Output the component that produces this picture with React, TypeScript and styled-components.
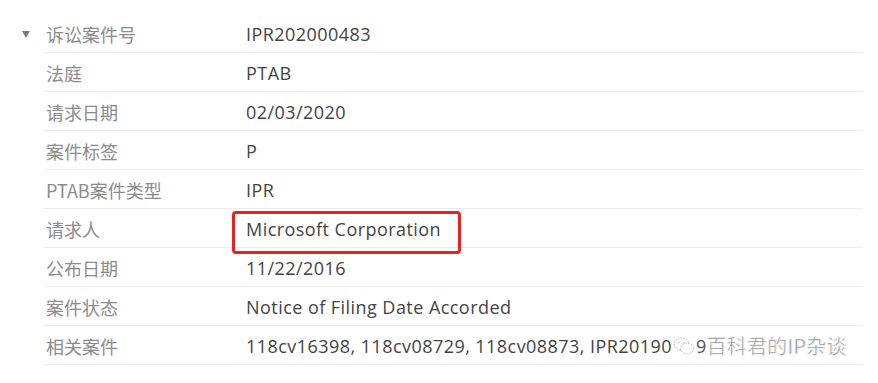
import React from "react";
import styled, { createGlobalStyle } from "styled-components";

const Global = createGlobalStyle`
  html, body { margin: 0; padding: 0; background: #fff; }
  body { font-family: "Open Sans", "Noto Sans CJK SC", sans-serif; }
`;

const Page = styled.div`
  width: 878px;
  height: 383px;
  padding: 14px 16px 0 16px;
  box-sizing: border-box;
  background: #fff;
  overflow: hidden;
`;

const Table = styled.div`
  display: flex;
  flex-direction: column;
`;

const Row = styled.div`
  display: flex;
  align-items: center;
  height: 39px;
`;

const Toggle = styled.div`
  width: 28px;
  flex: none;
  display: flex;
  justify-content: flex-start;
  padding-left: 6px;
  box-sizing: border-box;
`;

const Caret = styled.span`
  width: 0;
  height: 0;
  border-left: 4px solid transparent;
  border-right: 4px solid transparent;
  border-top: 7px solid #7a7a7a;
  margin-top: 2px;
`;

const Cells = styled.div`
  flex: 1;
  min-width: 0;
  display: flex;
  align-items: center;
  height: 100%;
  padding-top: 1px;
  border-bottom: 1px solid #ececec;
  box-sizing: border-box;
  position: relative;
`;

const Label = styled.div`
  width: 202px;
  flex: none;
  padding-left: 2px;
  box-sizing: border-box;
  font-family: "Noto Sans CJK SC", sans-serif;
  font-size: 18px;
  line-height: 24px;
  color: #8c8c8c;
  white-space: nowrap;
`;

const Value = styled.div`
  position: relative;
  flex: none;
  font-family: "Open Sans", "Noto Sans CJK SC", sans-serif;
  font-size: 18px;
  line-height: 24px;
  color: #444;
  white-space: nowrap;
  letter-spacing: 0.45px;
`;

const RedBox = styled.span`
  position: absolute;
  left: -14px;
  top: -6px;
  width: 229px;
  height: 43px;
  border: 3px solid #e8221d;
  border-radius: 4px;
  box-sizing: border-box;
  pointer-events: none;
`;

const Watermark = styled.div`
  display: flex;
  align-items: center;
  flex: none;
  margin-left: 1px;
  white-space: nowrap;
`;

const WmDigit = styled.span`
  font-family: "Open Sans", sans-serif;
  font-size: 18px;
  color: #555;
  margin-left: 1px;
`;

const WmText = styled.span`
  font-family: "Noto Sans CJK SC", sans-serif;
  font-size: 20px;
  letter-spacing: 0.2px;
  color: #8a8a8a;
  -webkit-text-stroke: 0.6px #fff;
  text-shadow: 0.5px 0 0 #c8c8c8;
`;

const rows: { label: string; value: string; boxed?: boolean; caret?: boolean; mark?: boolean }[] = [
  { label: "诉讼案件号", value: "IPR202000483", caret: true },
  { label: "法庭", value: "PTAB" },
  { label: "请求日期", value: "02/03/2020" },
  { label: "案件标签", value: "P" },
  { label: "PTAB案件类型", value: "IPR" },
  { label: "请求人", value: "Microsoft Corporation", boxed: true },
  { label: "公布日期", value: "11/22/2016" },
  { label: "案件状态", value: "Notice of Filing Date Accorded" },
  { label: "相关案件", value: "118cv16398, 118cv08729, 118cv08873, IPR20190", mark: true },
];

const WeChat = () => (
  <svg width="22" height="20" viewBox="0 0 22 20" fill="none" stroke="#b5b5b5" strokeWidth="1" strokeDasharray="1.6 1.2">
    <ellipse cx="8.5" cy="8" rx="7.5" ry="6.2" />
    <ellipse cx="14" cy="12.5" rx="6.5" ry="5.2" fill="#fff" />
    <circle cx="6" cy="6.5" r="0.8" fill="#b5b5b5" stroke="none" />
    <circle cx="11" cy="6.5" r="0.8" fill="#b5b5b5" stroke="none" />
  </svg>
);

export default function App() {
  return (
    <>
      <Global />
      <Page>
        <Table>
          {rows.map((r, i) => (
            <Row key={i}>
              <Toggle>{r.caret && <Caret />}</Toggle>
              <Cells>
                <Label>{r.label}</Label>
                <Value>
                  {r.value}
                  {r.boxed && <RedBox />}
                </Value>
                {r.mark && (
                  <Watermark>
                    <WeChat />
                    <WmDigit>9</WmDigit>
                    <WmText>百科君的IP杂谈</WmText>
                  </Watermark>
                )}
              </Cells>
            </Row>
          ))}
        </Table>
      </Page>
    </>
  );
}
